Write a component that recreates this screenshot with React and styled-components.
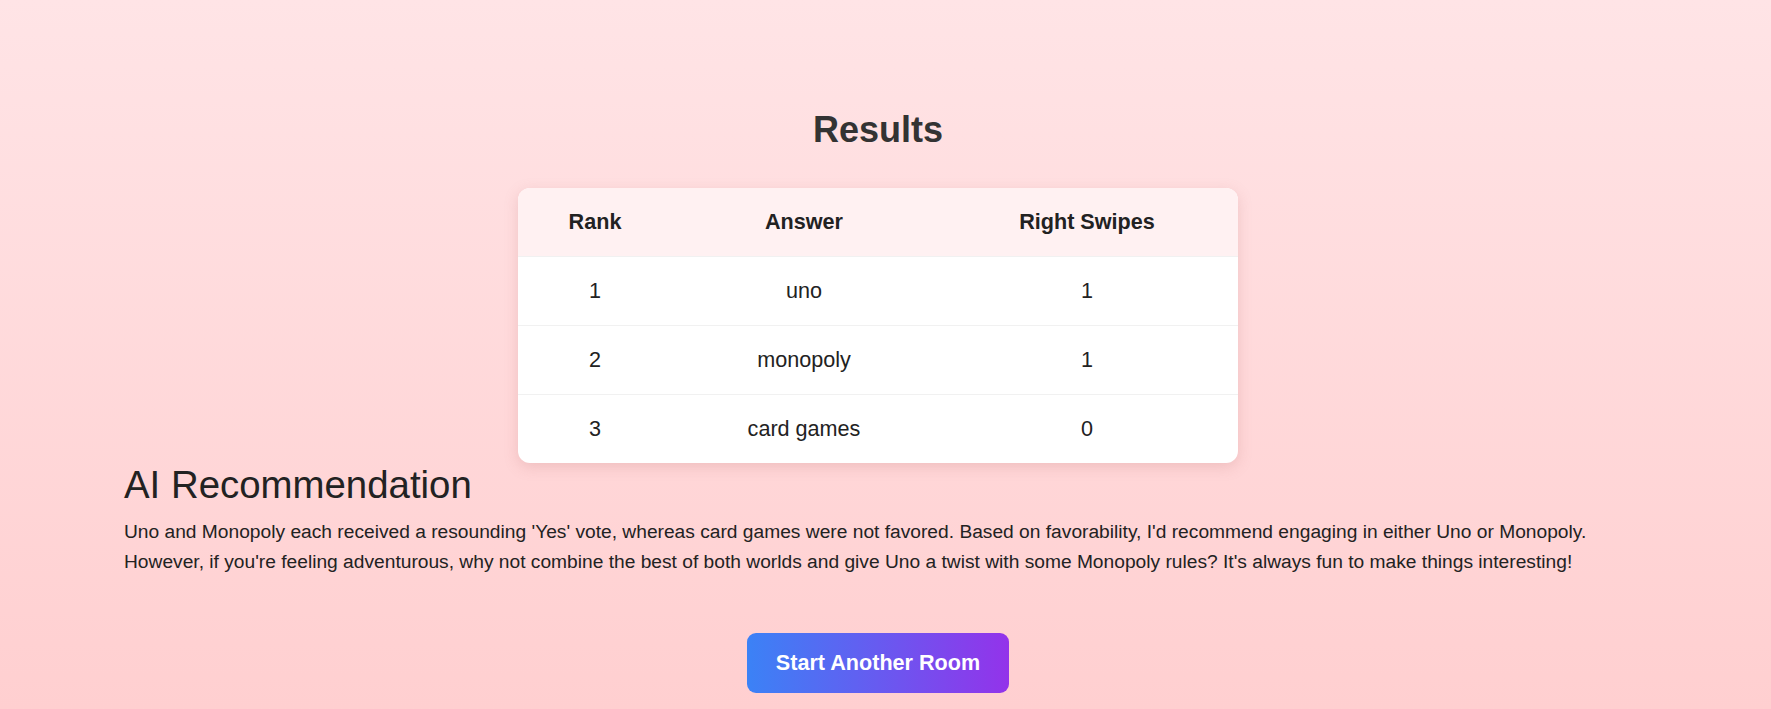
import React from 'react'
import styled, { createGlobalStyle } from 'styled-components'

const GlobalStyle = createGlobalStyle`
  html, body {
    margin: 0;
    padding: 0;
  }
  body {
    font-family: "Liberation Sans", Arial, sans-serif;
    color: #222;
  }
`

const results = [
  { rank: 1, answer: 'uno', swipes: 1 },
  { rank: 2, answer: 'monopoly', swipes: 1 },
  { rank: 3, answer: 'card games', swipes: 0 },
]

const columns = [
  { label: 'Rank', width: 154 },
  { label: 'Answer', width: 264 },
  { label: 'Right Swipes', width: 302 },
]

function ResultsPage() {
  return (
    <Page>
      <Title>Results</Title>

      <TableCard>
        <Table>
          <colgroup>
            {columns.map((c) => (
              <col key={c.label} style={{ width: c.width }} />
            ))}
          </colgroup>
          <thead>
            <tr>
              {columns.map((c) => (
                <HeadCell key={c.label}>{c.label}</HeadCell>
              ))}
            </tr>
          </thead>
          <tbody>
            {results.map((r) => (
              <Row key={r.rank}>
                <Cell>{r.rank}</Cell>
                <Cell>{r.answer}</Cell>
                <Cell>{r.swipes}</Cell>
              </Row>
            ))}
          </tbody>
        </Table>
      </TableCard>

      <Recommendation>
        <RecTitle>AI Recommendation</RecTitle>
        <RecText>
          Uno and Monopoly each received a resounding 'Yes' vote, whereas card games were not
          favored. Based on favorability, I'd recommend engaging in either Uno or Monopoly.
          However, if you're feeling adventurous, why not combine the best of both worlds and
          give Uno a twist with some Monopoly rules? It's always fun to make things interesting!
        </RecText>
      </Recommendation>

      <Actions>
        <StartButton>Start Another Room</StartButton>
      </Actions>
    </Page>
  )
}

const Page = styled.div`
  min-height: 100vh;
  box-sizing: border-box;
  padding: 109px 139px 16px 124px;
  background: linear-gradient(to bottom, #ffe4e6 0%, #ffcfd0 100%);
  display: flex;
  flex-direction: column;
  align-items: center;
`

const Title = styled.h1`
  margin: 0 0 37px;
  font-size: 36px;
  line-height: normal;
  font-weight: 700;
  color: #333;
`

const TableCard = styled.div`
  width: 720px;
  background: #fff;
  border-radius: 12px;
  overflow: hidden;
  box-shadow: 0 4px 14px rgba(190, 120, 120, 0.25);
`

const Table = styled.table`
  width: 100%;
  border-collapse: collapse;
  table-layout: fixed;
  font-size: 21.6px;
  line-height: 1.15;
`

const HeadCell = styled.th`
  padding: 21.7px 0;
  background: #fff1f2;
  font-weight: 700;
  color: #222;
  text-align: center;
`

const Row = styled.tr`
  border-top: 1px solid #f1f1f1;
`

const Cell = styled.td`
  padding: 21.6px 0;
  text-align: center;
  color: #222;
`

const Recommendation = styled.section`
  align-self: stretch;
`

const RecTitle = styled.h2`
  margin: 0 0 10px;
  font-size: 38.4px;
  line-height: normal;
  font-weight: 400;
  color: #222;
`

const RecText = styled.p`
  margin: 0;
  font-size: 19.2px;
  line-height: 1.55;
  color: #222;
`

const Actions = styled.div`
  margin-top: 56px;
  display: flex;
  justify-content: center;
`

const StartButton = styled.button`
  border: none;
  cursor: pointer;
  padding: 14.4px 28.8px;
  border-radius: 9px;
  font-family: "Liberation Sans", Arial, sans-serif;
  font-size: 21.6px;
  line-height: 1.45;
  font-weight: 700;
  color: #fff;
  background: linear-gradient(to right, #3b82f6, #9333ea);
`

export default function App() {
  return (
    <>
      <GlobalStyle />
      <ResultsPage />
    </>
  )
}
